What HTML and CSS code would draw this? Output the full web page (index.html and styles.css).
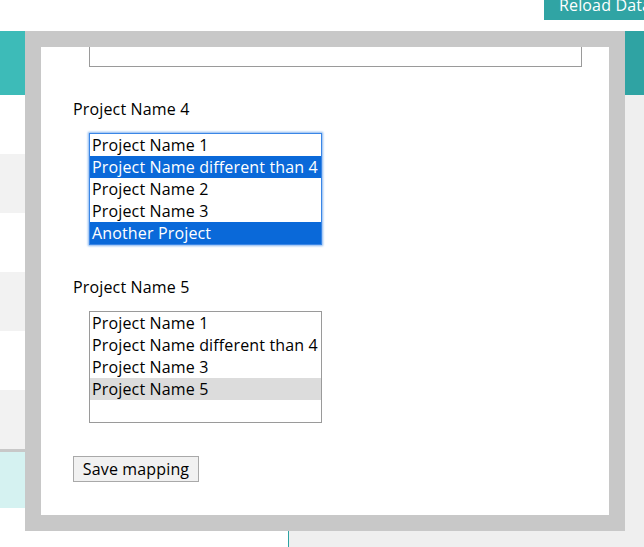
FILE: index.html
```html
<!DOCTYPE html>
<html>
<head>
<meta charset="utf-8">
<link rel="stylesheet" href="styles.css">
</head>
<body>
<div class="page">
  <header class="topbar">
    <button class="reload">Reload Data</button>
  </header>
  <div class="columns">
    <aside class="side">
      <div class="side-head"></div>
      <div class="row"></div>
      <div class="row alt"></div>
      <div class="row"></div>
      <div class="row alt"></div>
      <div class="row"></div>
      <div class="row alt last"></div>
      <div class="row active"></div>
      <div class="row"></div>
    </aside>
    <main class="main">
      <div class="main-head"></div>
    </main>
  </div>
</div>

<div class="modal">
  <div class="modal-body">
    <div class="textbox"></div>

    <div class="field">
      <div class="label">Project Name 4</div>
      <div class="listbox focused">
        <div class="opt">Project Name 1</div>
        <div class="opt sel">Project Name different than 4</div>
        <div class="opt">Project Name 2</div>
        <div class="opt">Project Name 3</div>
        <div class="opt sel">Another Project</div>
      </div>
    </div>

    <div class="field">
      <div class="label">Project Name 5</div>
      <div class="listbox">
        <div class="opt">Project Name 1</div>
        <div class="opt">Project Name different than 4</div>
        <div class="opt">Project Name 3</div>
        <div class="opt dim">Project Name 5</div>
        <div class="opt"></div>
      </div>
    </div>

    <button class="save">Save mapping</button>
  </div>
</div>
</body>
</html>
```

FILE: styles.css
```css
* { box-sizing: border-box; }
html, body { margin: 0; padding: 0; }
body {
  width: 644px;
  height: 547px;
  overflow: hidden;
  font-family: "Open Sans", Lato, sans-serif;
  font-size: 16px;
  letter-spacing: 0.15px;
  color: #000;
  background: #fff;
}
.page { display: flex; flex-direction: column; height: 547px; overflow: hidden; }
.topbar {
  flex: 0 0 31px;
  height: 31px;
  display: flex;
  justify-content: flex-end;
  overflow: hidden;
}
.reload {
  height: 30px;
  margin-top: -10px;
  margin-right: -30px;
  padding: 0 15px;
  border: 0;
  background: #30a4a4;
  color: #fff;
  font-family: inherit;
  font-size: 16px;
  letter-spacing: inherit;
  line-height: 30px;
  width: 130px;
  text-align: left;
  white-space: nowrap;
}
.columns { flex: 1 1 auto; min-height: 0; display: flex; overflow: hidden; }
.side {
  flex: 0 0 289px;
  border-right: 1px solid #2ea3a3;
  display: flex;
  flex-direction: column;
}
.side > div { flex-shrink: 0; }
.side-head { height: 64px; background: #3dbbb8; }
.row { height: 59px; background: #fff; }
.row.alt { background: #f2f2f2; }
.row.last { height: 62px; border-bottom: 3px solid #c8c8c8; }
.row.active { height: 56px; background: #d5f2f1; }
.main { flex: 1; background: #efefef; }
.main-head { height: 64px; background: #2fa3a3; }

.modal {
  position: fixed;
  left: 25px;
  top: 31px;
  width: 600px;
  height: 500px;
  padding: 16px;
  background: #c8c8c8;
}
.modal-body {
  height: 100%;
  background: #fff;
  padding: 0 27px 0 32px;
  overflow: hidden;
}
.textbox {
  margin-left: 16px;
  height: 20px;
  border: 1px solid #9a9a9a;
  border-top: 0;
}
.field { margin-top: 32px; }
.label { line-height: 20px; height: 20px; }
.listbox {
  margin: 14px 0 0 16px;
  width: 233px;
  height: 112px;
  border: 1px solid #9a9a9a;
  background: #fff;
}
.listbox.focused {
  border-color: #3a86e6;
  box-shadow: 0 0 2px 1px #86b5ef;
}
.opt {
  height: 22px;
  line-height: 22px;
  padding-left: 2px;
  white-space: nowrap;
  overflow: hidden;
}
.opt.sel { background: #0a69d9; color: #fff; }
.opt.dim { background: #dcdcdc; }
.save {
  display: block;
  margin-top: 33px;
  width: 126px;
  height: 26px;
  padding: 0 7px;
  border: 1px solid #a9a9a9;
  border-radius: 0;
  background: #f1f1f1;
  font-family: inherit;
  font-size: 16px;
  letter-spacing: inherit;
  line-height: 24px;
  color: #000;
  text-align: center;
}
```
